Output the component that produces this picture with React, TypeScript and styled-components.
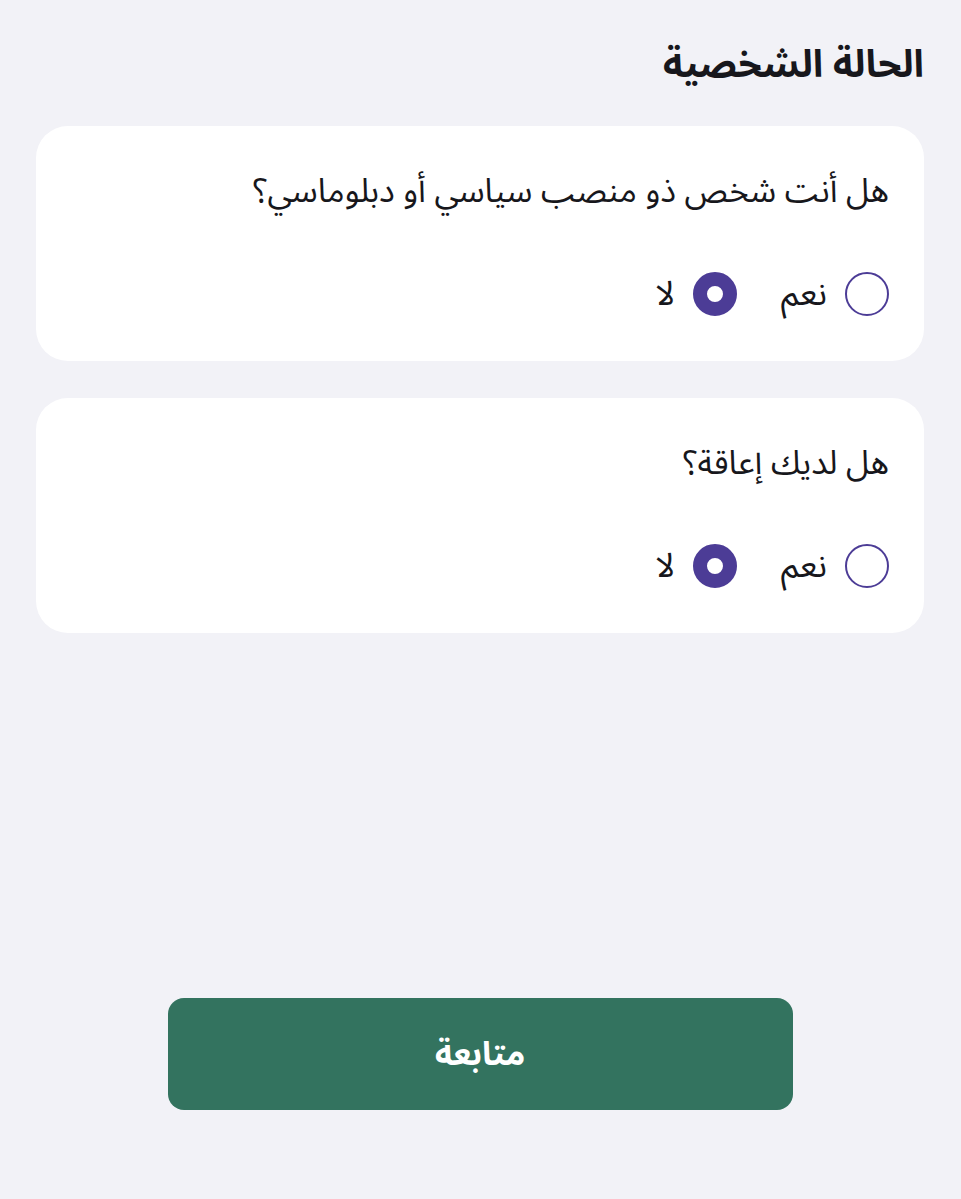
import styled, { createGlobalStyle } from "styled-components";

const GlobalStyle = createGlobalStyle`
  html, body {
    margin: 0;
    padding: 0;
    background: #f2f2f7;
  }
  body {
    font-family: "Noto Sans Arabic", "Noto Sans", "DejaVu Sans", sans-serif;
    color: #17171c;
  }
`;

const questions = [
  { id: "pep", text: "هل أنت شخص ذو منصب سياسي أو دبلوماسي؟", value: "no" },
  { id: "disability", text: "هل لديك إعاقة؟", value: "no" },
];

const App = () => {
  return (
    <>
      <GlobalStyle />
      <Page dir="rtl">
        <Title>الحالة الشخصية</Title>
        <CardList>
          {questions.map((q) => (
            <Card key={q.id}>
              <Question>{q.text}</Question>
              <Options>
                <Option>
                  <Radio $checked={q.value === "yes"} />
                  <OptionLabel>نعم</OptionLabel>
                </Option>
                <Option>
                  <Radio $checked={q.value === "no"} />
                  <OptionLabel>لا</OptionLabel>
                </Option>
              </Options>
            </Card>
          ))}
        </CardList>
        <Footer>
          <ContinueButton>متابعة</ContinueButton>
        </Footer>
      </Page>
    </>
  );
};

const Page = styled.div`
  min-height: 1199px;
  box-sizing: border-box;
  padding: 38px 37px 89px 36px;
  display: flex;
  flex-direction: column;
`;

const Title = styled.h1`
  margin: 0;
  font-size: 38px;
  font-weight: 700;
  line-height: 54px;
`;

const CardList = styled.div`
  margin-top: 34px;
  display: flex;
  flex-direction: column;
  gap: 37px;
`;

const Card = styled.div`
  background: #ffffff;
  border-radius: 32px;
  height: 235px;
  box-sizing: border-box;
  padding: 44px 35px 0;
  display: flex;
  flex-direction: column;
`;

const Question = styled.p`
  margin: 0;
  font-size: 33px;
  font-weight: 400;
  line-height: 44px;
`;

const Options = styled.div`
  margin-top: 58px;
  display: flex;
  align-items: center;
  gap: 44px;
`;

const Option = styled.label`
  display: flex;
  align-items: center;
  gap: 18px;
  cursor: pointer;
`;

const Radio = styled.span<{ $checked: boolean }>`
  width: 44px;
  height: 44px;
  border-radius: 50%;
  box-sizing: border-box;
  border: ${(p) => (p.$checked ? "14px solid #4c3c96" : "2px solid #4c3c96")};
  background: #ffffff;
  flex-shrink: 0;
`;

const OptionLabel = styled.span`
  font-size: 34px;
  line-height: 44px;
`;

const Footer = styled.div`
  margin-top: auto;
  display: flex;
  justify-content: center;
`;

const ContinueButton = styled.button`
  width: 625px;
  height: 112px;
  border: none;
  border-radius: 16px;
  background: #33735f;
  color: #ffffff;
  font-family: inherit;
  font-size: 33px;
  font-weight: 700;
  cursor: pointer;
`;

export default App;
